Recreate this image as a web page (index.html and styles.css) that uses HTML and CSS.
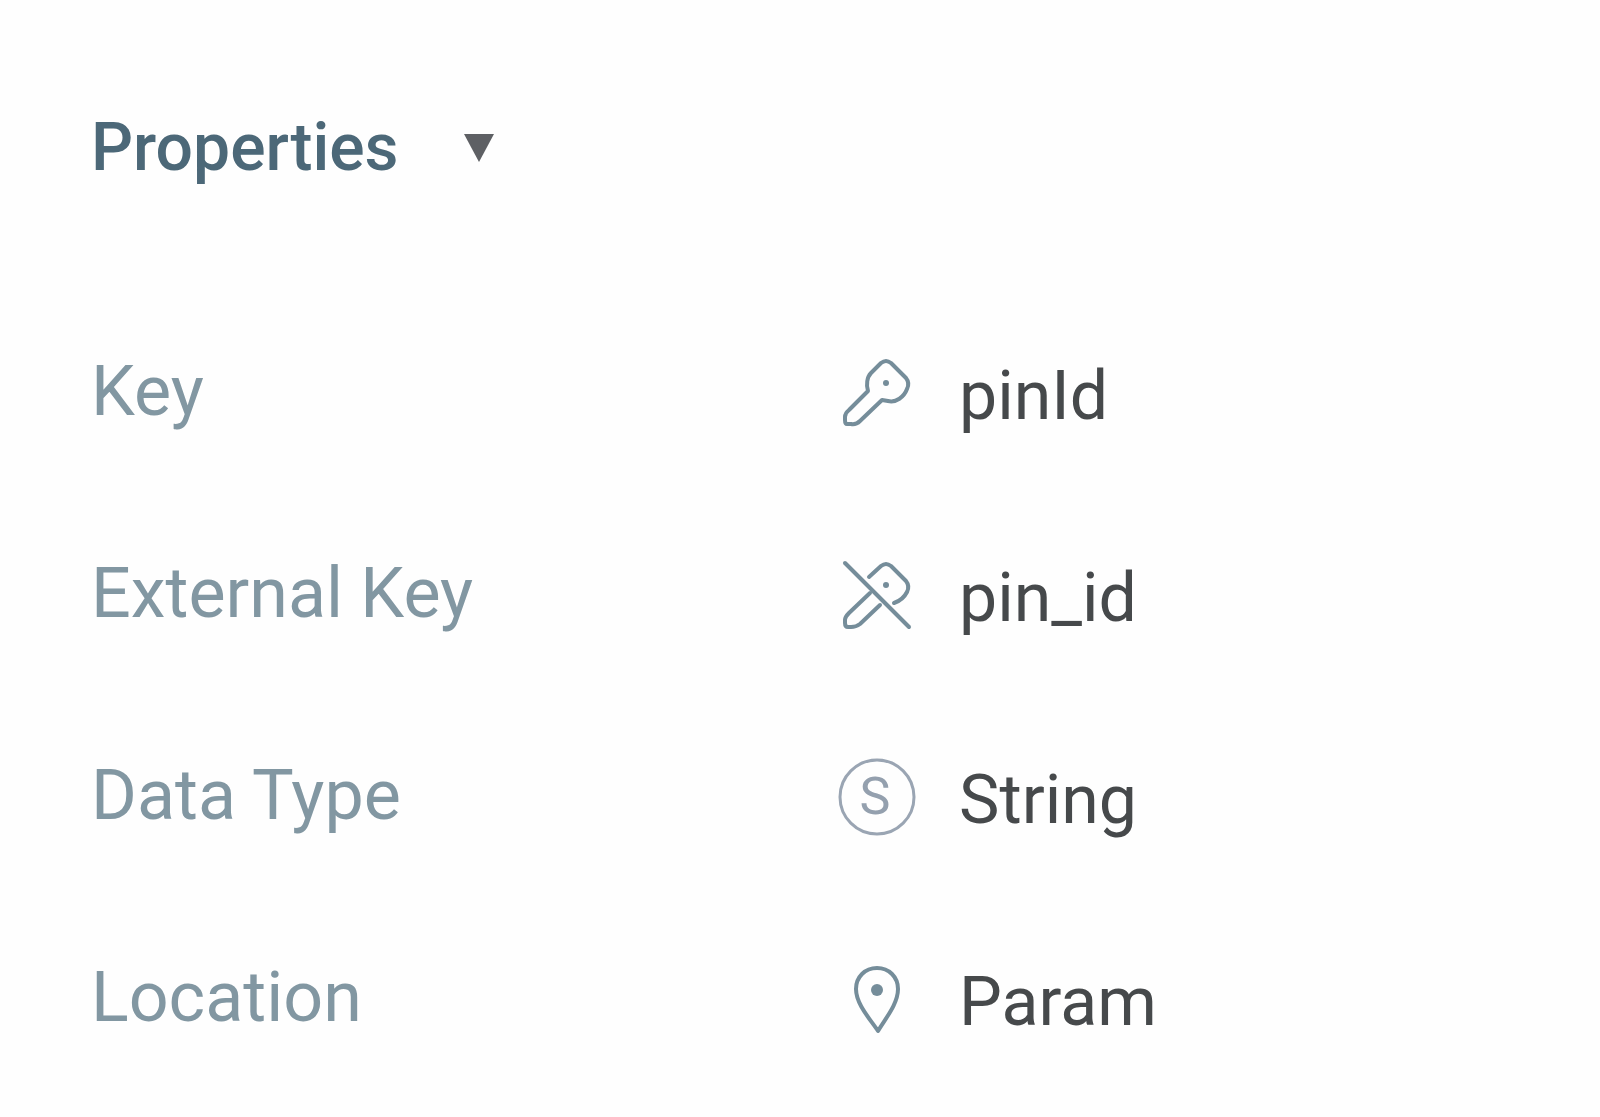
FILE: index.html
```html
<!DOCTYPE html>
<html lang="en">
<head>
<meta charset="utf-8">
<meta name="viewport" content="width=device-width, initial-scale=1">
<title>Properties</title>
<link rel="stylesheet" href="styles.css">
</head>
<body>
<main class="panel">
  <h1 class="panel-title">
    <button class="toggle" type="button" aria-expanded="true" aria-controls="properties">
      Properties
      <svg class="caret" viewBox="0 0 32 28" aria-hidden="true"><path d="M1 0H31L16 28Z"/></svg>
    </button>
  </h1>
  <dl class="properties" id="properties">
    <div class="row">
      <dt class="label">Key</dt>
      <dd class="value">
        <svg class="icon" viewBox="0 0 80 80" aria-hidden="true">
          <path d="M31 38C29 32 30 24 34 20L44 10Q49 6 54 10L69 25Q73 30 70 36C67 44 59 50 51 48L45 47L23 68Q19 72 14 71H10Q8 71 8 67V64Q8 60 12 57Z"/>
          <circle class="dot" cx="49" cy="30" r="3"/>
        </svg>
        <span class="text">pinId</span>
      </dd>
    </div>
    <div class="row">
      <dt class="label">External Key</dt>
      <dd class="value">
        <svg class="icon" viewBox="0 0 80 80" aria-hidden="true">
          <path d="M32 22L44 11Q49 7 54 11L69 26Q73 31 70 37Q66 45 57 48"/>
          <path d="M33 38L12 58Q8 62 8 65V68Q8 72 11 72H14Q19 72 23 69L43 50"/>
          <path d="M8 8L72 72"/>
          <circle class="dot" cx="49" cy="30" r="3"/>
        </svg>
        <span class="text">pin_id</span>
      </dd>
    </div>
    <div class="row">
      <dt class="label">Data Type</dt>
      <dd class="value">
        <svg class="icon icon-type" viewBox="0 0 80 80" aria-hidden="true">
          <circle cx="40" cy="40" r="37"/>
          <text x="38" y="57" text-anchor="middle">S</text>
        </svg>
        <span class="text">String</span>
      </dd>
    </div>
    <div class="row">
      <dt class="label">Location</dt>
      <dd class="value">
        <svg class="icon" viewBox="0 0 80 80" aria-hidden="true">
          <path d="M40 9C28 9 19 18 19 30C19 45 33 60 41 72C48 60 61 45 61 30C61 18 52 9 40 9Z"/>
          <circle class="dot" cx="40" cy="31" r="6"/>
        </svg>
        <span class="text">Param</span>
      </dd>
    </div>
  </dl>
</main>
</body>
</html>
```
FILE: styles.css
```css
* {
  box-sizing: border-box;
}

body {
  margin: 0;
  background: #fefefe;
  font-family: Roboto, "Liberation Sans", sans-serif;
  font-size: 68px;
  line-height: 80px;
}

.panel {
  padding: 108px 88px 20px 91px;
}

.panel-title {
  margin: 0 0 102px;
  font-size: 66px;
  font-weight: 500;
}

.toggle {
  display: flex;
  align-items: center;
  gap: 64px;
  padding: 0;
  border: 0;
  background: none;
  color: #4c6878;
  font: inherit;
  cursor: pointer;
}

.caret {
  width: 32px;
  height: 28px;
  fill: #5e6064;
}

.properties {
  margin: 0;
}

.row {
  display: grid;
  grid-template-columns: 21fr 19fr;
  align-items: center;
  padding: 61px 0;
}

.label {
  color: #8297a2;
  font-size: 70px;
}

.value {
  display: flex;
  align-items: center;
  gap: 42px;
  height: 80px;
  margin: 0;
  padding-top: 4px;
  color: #46494b;
}

.text {
  padding-top: 6px;
}

.icon {
  flex: none;
  width: 80px;
  height: 80px;
  fill: none;
  stroke: #758d9a;
  stroke-width: 4;
  stroke-linecap: round;
  stroke-linejoin: round;
}

.icon .dot {
  fill: #758d9a;
  stroke: none;
}

.icon-type {
  stroke: #9aa5b3;
  stroke-width: 3;
}

.icon-type text {
  fill: #94a0ae;
  stroke: none;
  font-size: 52px;
}
```
